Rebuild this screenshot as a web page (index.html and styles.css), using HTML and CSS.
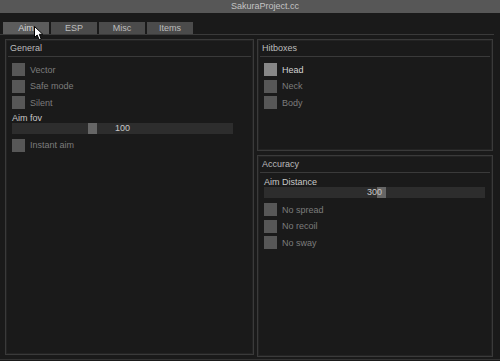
FILE: index.html
```html
<!DOCTYPE html>
<html lang="en">
  <head>
    <meta charset="UTF-8" />
    <title>SakuraProject.cc</title>
    <link rel="stylesheet" href="styles.css">
  </head>
  <body>
    <div class="titlebar">SakuraProject.cc</div>

    <nav class="tabs">
      <div class="tab active">Aim</div>
      <div class="tab">ESP</div>
      <div class="tab">Misc</div>
      <div class="tab">Items</div>
    </nav>

    <main class="content">
      <section class="panel panel-general">
        <div class="panel-head">General</div>
        <div class="panel-body">
          <div class="check"><span class="box"></span><span class="text">Vector</span></div>
          <div class="check"><span class="box"></span><span class="text">Safe mode</span></div>
          <div class="check"><span class="box"></span><span class="text">Silent</span></div>
          <div class="slider-label">Aim fov</div>
          <div class="slider">
            <span class="thumb" style="left: 76px"></span>
            <span class="value">100</span>
          </div>
          <div class="check"><span class="box"></span><span class="text">Instant aim</span></div>
        </div>
      </section>

      <div class="column">
        <section class="panel panel-hitboxes">
          <div class="panel-head">Hitboxes</div>
          <div class="panel-body">
            <div class="check on"><span class="box"></span><span class="text">Head</span></div>
            <div class="check"><span class="box"></span><span class="text">Neck</span></div>
            <div class="check"><span class="box"></span><span class="text">Body</span></div>
          </div>
        </section>

        <section class="panel panel-accuracy">
          <div class="panel-head">Accuracy</div>
          <div class="panel-body tight">
            <div class="slider-label">Aim Distance</div>
            <div class="slider">
              <span class="thumb" style="left: 113px"></span>
              <span class="value">300</span>
            </div>
            <div class="check"><span class="box"></span><span class="text">No spread</span></div>
            <div class="check"><span class="box"></span><span class="text">No recoil</span></div>
            <div class="check"><span class="box"></span><span class="text">No sway</span></div>
          </div>
        </section>
      </div>
    </main>

    <!-- mouse pointer over the Aim tab -->
    <svg class="cursor" width="11" height="15" viewBox="0 0 11 15">
      <path d="M0.5 0.5 L0.5 11.5 L3.2 9 L5.2 13.8 L7.2 13 L5.3 8.3 L8.8 8.3 Z" fill="#fff" stroke="#000" stroke-width="1" />
    </svg>
  </body>
</html>
```

FILE: styles.css
```css
* {
  box-sizing: border-box;
  margin: 0;
  padding: 0;
}

body {
  width: 500px;
  height: 361px;
  overflow: hidden;
  position: relative;
  background: #1a1a1a;
  font-family: "Liberation Sans", Arial, sans-serif;
  font-size: 9px;
  color: #7c7c7c;
}

.titlebar {
  height: 13px;
  line-height: 13px;
  padding-left: 30px;
  text-align: center;
  background: #575757;
  color: #c4c4c4;
}

/* tab strip */
.tabs {
  display: flex;
  gap: 2px;
  margin-right: 6px;
  padding: 9px 0 0 3px;
  border-bottom: 1px solid #3a3a3a;
}

.tab {
  width: 46px;
  height: 12px;
  line-height: 12px;
  text-align: center;
  background: #4b4b4b;
  color: #bdbdbd;
}

.tab.active {
  background: #5c5c5c;
  color: #d6d6d6;
}

/* panels */
.content {
  display: flex;
  gap: 3px;
  padding: 4px 0 2px 5px;
  border-bottom: 1px solid #333;
}

.column {
  display: flex;
  flex-direction: column;
  gap: 4px;
  width: 236px;
}

.panel {
  border: 1px solid #3a3a3a;
  box-shadow: inset 0 0 0 1px #232323;
}

.panel-general {
  width: 249px;
  height: 316px;
}

.panel-hitboxes {
  height: 112px;
}

.panel-accuracy {
  height: 202px;
}

.panel-head {
  height: 17px;
  line-height: 17px;
  margin: 0 2px;
  padding-left: 2px;
  border-bottom: 1px solid #3a3a3a;
  color: #bcbcbc;
}

.panel-body {
  padding: 6px 0 0 6px;
}

.panel-body.tight {
  padding-top: 4px;
}

/* checkboxes */
.check {
  display: flex;
  align-items: center;
  height: 13px;
  margin-bottom: 3.5px;
}

.check .box {
  width: 13px;
  height: 13px;
  background: #575757;
}

.check .text {
  margin-left: 5px;
}

.check.on .box {
  background: #878787;
}

.check.on .text {
  color: #d4d4d4;
}

/* sliders */
.slider-label {
  height: 10px;
  line-height: 10px;
  color: #c8c8c8;
}

.slider {
  position: relative;
  width: 221px;
  height: 11px;
  margin-bottom: 5px;
  background: #2d2d2d;
  line-height: 11px;
  text-align: center;
  color: #c8c8c8;
}

.slider .thumb {
  position: absolute;
  top: 0;
  width: 9px;
  height: 11px;
  background: #666;
}

.slider .value {
  position: relative;
}

.cursor {
  position: absolute;
  left: 34px;
  top: 26px;
}
```
